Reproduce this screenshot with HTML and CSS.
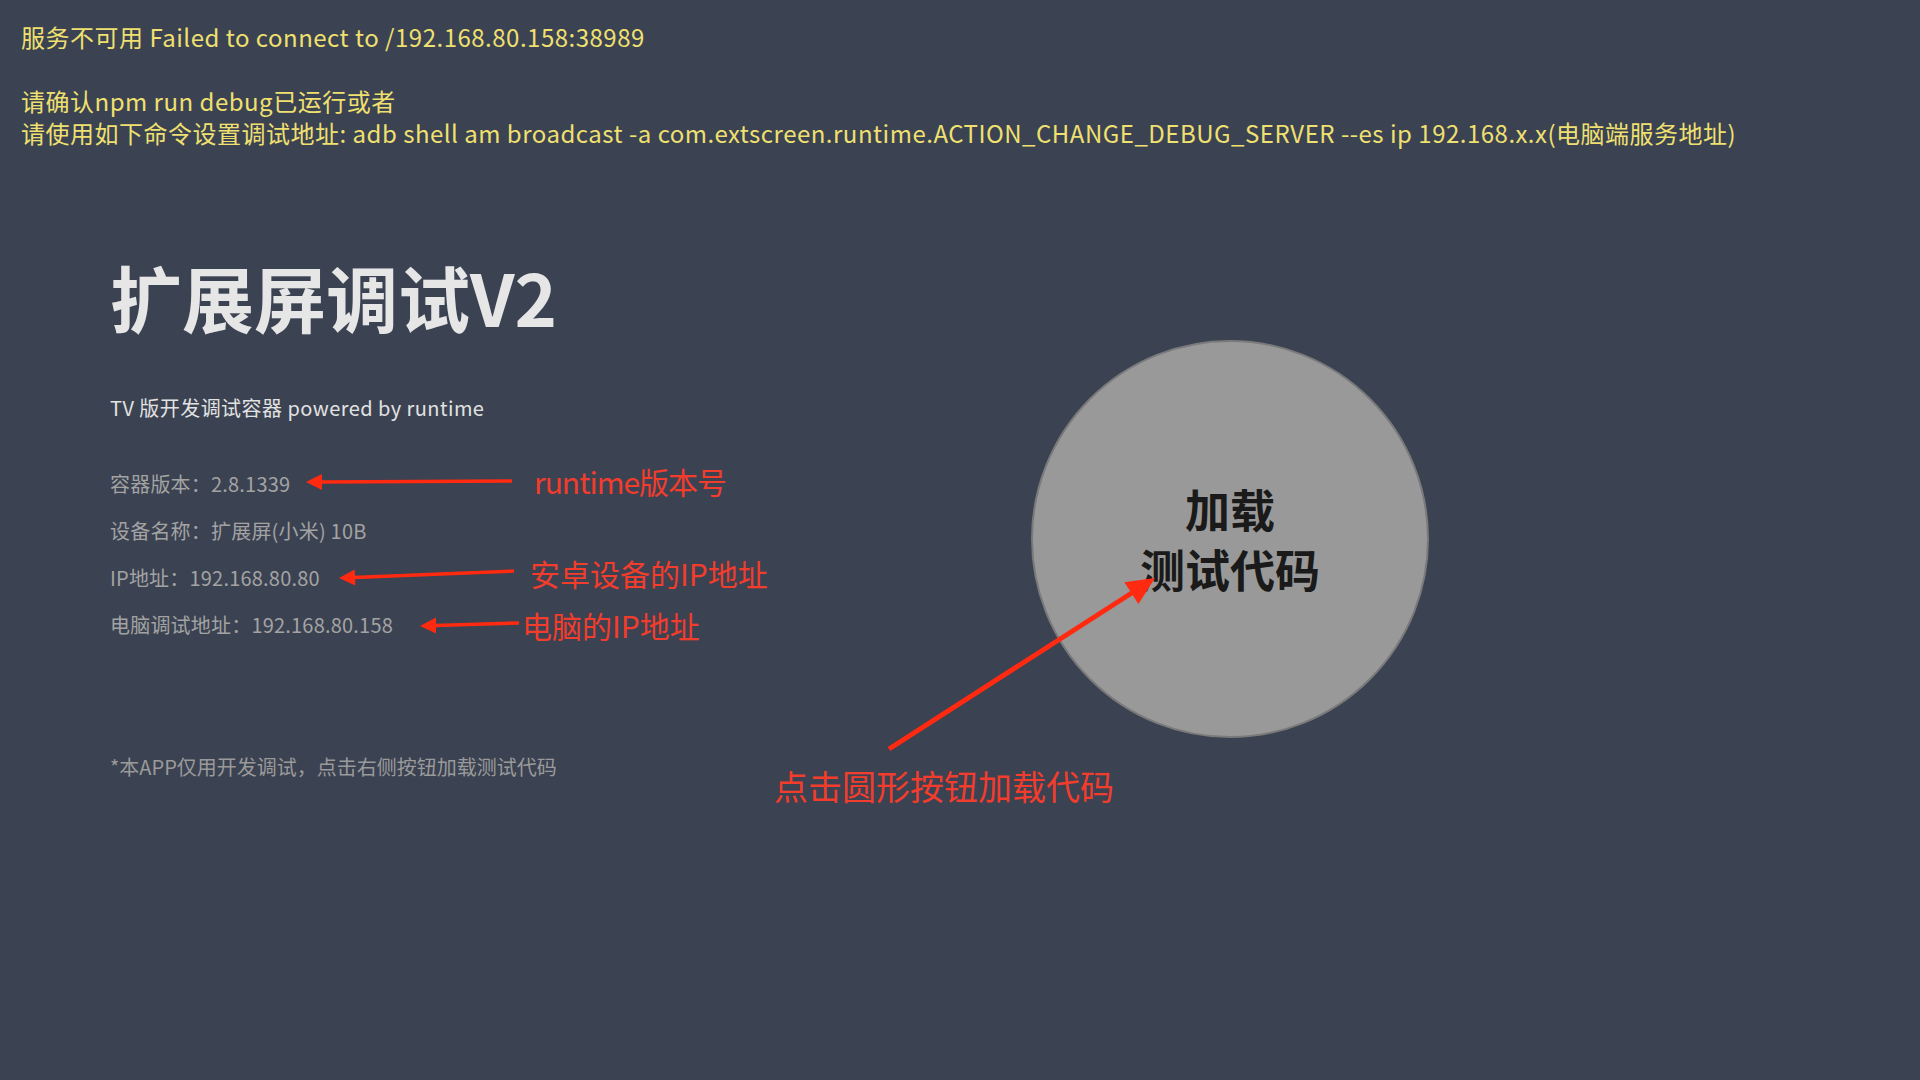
FILE: index.html
```html
<!DOCTYPE html>
<html lang="zh-CN">
<head>
<meta charset="utf-8">
<title>扩展屏调试V2</title>
<link rel="stylesheet" href="styles.css">
</head>
<body>
<div class="page">
  <div class="error">
    <p class="error-line">服务不可用 Failed to connect to /192.168.80.158:38989</p>
    <p class="error-line blank"></p>
    <p class="error-line">请确认npm run debug已运行或者</p>
    <p class="error-line">请使用如下命令设置调试地址: adb shell am broadcast -a com.extscreen.runtime.ACTION_CHANGE_DEBUG_SERVER --es ip 192.168.x.x(电脑端服务地址)</p>
  </div>

  <div class="main">
    <div class="left">
      <h1 class="title">扩展屏调试V2</h1>
      <p class="subtitle">TV 版开发调试容器 powered by runtime</p>
      <ul class="info">
        <li>容器版本：2.8.1339</li>
        <li>设备名称：扩展屏(小米) 10B</li>
        <li>IP地址：192.168.80.80</li>
        <li>电脑调试地址：192.168.80.158</li>
      </ul>
      <p class="note">*本APP仅用开发调试，点击右侧按钮加载测试代码</p>
    </div>
    <div class="right">
      <div class="load-btn">
        <span>加载</span>
        <span>测试代码</span>
      </div>
    </div>
  </div>

  <div class="annotations">
    <svg class="arrows" width="1920" height="1080" viewBox="0 0 1920 1080">
      <g stroke="#ff2a10" stroke-width="3.5" fill="none" stroke-linecap="butt">
        <line x1="512" y1="481" x2="320" y2="482"/>
        <line x1="514" y1="571" x2="354" y2="577.4"/>
        <line x1="519" y1="623" x2="435" y2="625.5"/>
        <line x1="889" y1="749" x2="1134" y2="591.5" stroke-width="5"/>
      </g>
      <g fill="#ff2a10">
        <polygon points="306,482 322,474 322,490"/>
        <polygon points="339,578 355.3,585.4 354.7,569.4"/>
        <polygon points="420,626 436,633.5 436,617.5"/>
        <polygon points="1155,578 1138.4,604 1124.4,582.2"/>
      </g>
    </svg>
    <span class="note-red n1">runtime版本号</span>
    <span class="note-red n2">安卓设备的IP地址</span>
    <span class="note-red n3">电脑的IP地址</span>
    <span class="note-red n4">点击圆形按钮加载代码</span>
  </div>
</div>
</body>
</html>
```

FILE: styles.css
```css
* { box-sizing: border-box; }

html, body {
  margin: 0;
  padding: 0;
}

body {
  background: #3b4252;
  font-family: "Noto Sans CJK SC", "Noto Sans", sans-serif;
  width: 1920px;
  height: 1080px;
  overflow: hidden;
}

.page {
  position: relative;
  width: 1920px;
  height: 1080px;
}

.error {
  padding: 21px 0 0 21px;
}

.error-line {
  margin: 0;
  font-size: 24px;
  line-height: 32px;
  height: 32px;
  color: #efe070;
  white-space: nowrap;
  letter-spacing: 0.5px;
}

.main {
  display: flex;
  margin-top: 104px;
}

.left {
  flex: 0 0 1031px;
  padding-left: 110px;
}

.title {
  margin: 0;
  font-size: 72px;
  line-height: 86px;
  font-weight: 700;
  color: #e6e6e6;
}

.subtitle {
  margin: 55px 0 0;
  font-size: 20px;
  line-height: 28px;
  color: #e2e2e2;
  letter-spacing: 0.45px;
}

.info {
  list-style: none;
  margin: 48px 0 0;
  padding: 0;
  display: flex;
  flex-direction: column;
  gap: 19px;
}

.info li {
  font-size: 20px;
  line-height: 28px;
  color: #a3a3a3;
  letter-spacing: 0.2px;
}

.note {
  margin: 114px 0 0;
  font-size: 20px;
  line-height: 28px;
  color: #9a9a9a;
}

.right {
  flex: 0 0 auto;
}

.load-btn {
  margin-top: 87px;
  width: 398px;
  height: 398px;
  border-radius: 50%;
  background: #999999;
  border: 2px solid #7a7a7a;
  display: flex;
  flex-direction: column;
  align-items: center;
  justify-content: center;
  color: #1a1a1a;
  font-size: 45px;
  font-weight: 700;
  line-height: 60px;
}

.annotations {
  position: absolute;
  inset: 0;
  pointer-events: none;
}

.arrows {
  position: absolute;
  left: 0;
  top: 0;
}

.note-red {
  position: absolute;
  color: #f23c2c;
  font-size: 30px;
  line-height: 40px;
  white-space: nowrap;
}

.n1 { left: 534px; top: 461px; letter-spacing: -1px; }
.n2 { left: 530px; top: 553px; }
.n3 { left: 522px; top: 605px; }
.n4 { left: 774px; top: 763px; font-size: 34px; line-height: 46px; }
```
